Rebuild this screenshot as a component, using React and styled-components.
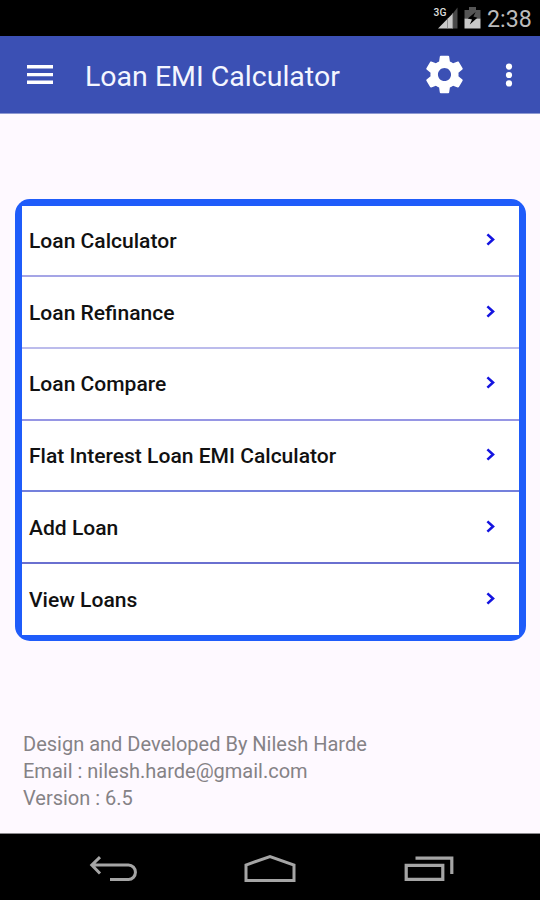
import React from "react";
import styled, { createGlobalStyle } from "styled-components";

const menuItems = [
  { name: "Loan Calculator", line: "#a5a5e6" },
  { name: "Loan Refinance", line: "#bcbcec" },
  { name: "Loan Compare", line: "#9696e4" },
  { name: "Flat Interest Loan EMI Calculator", line: "#7480dc" },
  { name: "Add Loan", line: "#6a70d0" },
  { name: "View Loans" }
];

const SignalIcon = () => (
  <svg width="26" height="24" viewBox="433 6 26 24">
    <path d="M438 28.5 453 13.2V28.5Z" fill="#c9c9c9" />
    <path d="M453 13.2 457.5 7.5V28.5H453Z" fill="#494949" />
    <path d="M447.5 18.5V28.5M452.7 13V28.5" stroke="#777" strokeWidth="0.7" />
    <text
      x="433.6"
      y="16.4"
      fill="#dcdcdc"
      stroke="#000"
      strokeWidth="2"
      paintOrder="stroke"
      fontFamily="Roboto, sans-serif"
      fontSize="11.5"
      fontWeight="500"
      textLength="12.8"
      lengthAdjust="spacingAndGlyphs"
    >
      3G
    </text>
  </svg>
);

const BatteryIcon = () => (
  <svg width="17" height="24" viewBox="464 6 17 24">
    <path d="M469 7h7v3h4.5v8.5h-16V10H469Z" fill="#555" />
    <path d="M464.5 18.5h16v10h-16Z" fill="#c9c9c9" />
    <path d="M475.6 12 467.8 18.4 472 19.6 469.8 24.6 477.4 17.8 473.4 16.6Z" fill="#000" />
  </svg>
);

const MenuIcon = () => (
  <svg width="26" height="22" viewBox="0 0 26 22">
    <path d="M0 2.8h26M0 10.6h26M0 18.3h26" stroke="#fff" strokeWidth="3.4" />
  </svg>
);

const GearIcon = () => (
  <svg width="45" height="45" viewBox="0 0 24 24" fill="#fff">
    <path d="M19.43 12.98c.04-.32.07-.64.07-.98s-.03-.66-.07-.98l2.11-1.65c.19-.15.24-.42.12-.64l-2-3.46c-.12-.22-.39-.3-.61-.22l-2.49 1c-.52-.4-1.08-.73-1.69-.98l-.38-2.65C14.46 2.18 14.25 2 14 2h-4c-.25 0-.46.18-.49.42l-.38 2.65c-.61.25-1.17.59-1.69.98l-2.49-1c-.23-.09-.49 0-.61.22l-2 3.46c-.13.22-.07.49.12.64l2.11 1.65c-.04.32-.07.65-.07.98s.03.66.07.98l-2.11 1.65c-.19.15-.24.42-.12.64l2 3.46c.12.22.39.3.61.22l2.49-1c.52.4 1.08.73 1.69.98l.38 2.65c.03.24.24.42.49.42h4c.25 0 .46-.18.49-.42l.38-2.65c.61-.25 1.17-.59 1.69-.98l2.49 1c.23.09.49 0 .61-.22l2-3.46c.12-.22.07-.49-.12-.64l-2.11-1.65zM12 15.5c-1.93 0-3.5-1.57-3.5-3.5s1.57-3.5 3.5-3.5 3.5 1.57 3.5 3.5-1.57 3.5-3.5 3.5z" />
  </svg>
);

const MoreIcon = () => (
  <svg width="8" height="24" viewBox="0 0 8 24" fill="#fff">
    <circle cx="4" cy="3.6" r="3.1" />
    <circle cx="4" cy="12" r="3.1" />
    <circle cx="4" cy="20.4" r="3.1" />
  </svg>
);

const ChevronIcon = () => (
  <svg width="9" height="13" viewBox="0 0 9 13">
    <path d="M1.4 1.4 7 6.5 1.4 11.6" fill="none" stroke="#1414e0" strokeWidth="2.6" />
  </svg>
);

const BackIcon = () => (
  <svg width="48" height="28" viewBox="89 855 48 28">
    <path
      d="M92 865H128.5A6.9 7.2 0 0 1 128.5 879.5H110M100 857.2 91.8 865 100 873.5"
      fill="none"
      stroke="#a5a5a5"
      strokeWidth="3"
    />
  </svg>
);

const HomeIcon = () => (
  <svg width="52" height="30" viewBox="244.5 853 52 30">
    <path d="M246.5 879.5V864L270.5 855.5 294.5 864V879.5Z" fill="none" stroke="#a5a5a5" strokeWidth="3" />
  </svg>
);

const RecentsIcon = () => (
  <svg width="50" height="28" viewBox="404.5 855 50 28">
    <path
      d="M406.7 865.4H443.3V879.4H406.7ZM416 858.2H452.3V874"
      fill="none"
      stroke="#a5a5a5"
      strokeWidth="3.2"
    />
  </svg>
);

const App = () => (
  <Screen>
    <GlobalStyle />
    <StatusBar>
      <SignalIcon />
      <BatteryIcon />
      <Clock>2:38</Clock>
    </StatusBar>
    <Toolbar>
      <IconButton aria-label="Menu">
        <MenuIcon />
      </IconButton>
      <Title>Loan EMI Calculator</Title>
      <Actions>
        <IconButton aria-label="Settings">
          <GearIcon />
        </IconButton>
        <IconButton aria-label="More">
          <MoreIcon />
        </IconButton>
      </Actions>
    </Toolbar>
    <Content>
      <MenuCard>
        {menuItems.map(item => (
          <MenuRow key={item.name} $line={item.line}>
            <RowName>{item.name}</RowName>
            <ChevronIcon />
          </MenuRow>
        ))}
      </MenuCard>
      <Credits>
        <CreditLine>Design and Developed By Nilesh Harde</CreditLine>
        <CreditLine>Email : nilesh.harde@gmail.com</CreditLine>
        <CreditLine>Version : 6.5</CreditLine>
      </Credits>
    </Content>
    <NavBar>
      <BackIcon />
      <HomeIcon />
      <RecentsIcon />
    </NavBar>
  </Screen>
);

export default App;

const GlobalStyle = createGlobalStyle`
  * {
    box-sizing: border-box;
  }
  body {
    margin: 0;
    font-family: Roboto, sans-serif;
  }
  svg {
    display: block;
    flex-shrink: 0;
  }
`;

const Screen = styled.div`
  display: flex;
  flex-direction: column;
  width: 540px;
  height: 900px;
  overflow: hidden;
  background: #fef9ff;
`;

const StatusBar = styled.div`
  display: flex;
  height: 36px;
  padding: 6px 9px 0 0;
  justify-content: flex-end;
  gap: 5px;
  background: #000;
`;

const Clock = styled.span`
  width: 45px;
  padding-left: 1px;
  font-size: 23.2px;
  line-height: 26px;
  color: #bcbcbc;
`;

const Toolbar = styled.div`
  display: flex;
  align-items: center;
  height: 78px;
  padding: 0 27px;
  background: #3b50b4;
  border-bottom: 1px solid #8e99d2;
`;

const IconButton = styled.button`
  display: flex;
  padding: 0;
  border: 0;
  background: none;
`;

const Title = styled.h1`
  margin: 3px 0 0 32px;
  font-size: 28.5px;
  font-weight: 400;
  white-space: nowrap;
  color: #f4f6ff;
`;

const Actions = styled.div`
  display: flex;
  align-items: center;
  gap: 38px;
  margin-left: auto;
`;

const Content = styled.main`
  display: flex;
  flex: 1;
  flex-direction: column;
  padding: 85px 14.5px 0;
`;

const MenuCard = styled.div`
  height: 442px;
  padding: 6.7px 7px 6px;
  border-radius: 15px;
  background: #1f5cfa;
`;

const MenuRow = styled.div`
  display: flex;
  align-items: center;
  justify-content: space-between;
  height: 71.7px;
  padding: 0 24px 2px 7.5px;
  background: #fff;
  border-bottom: ${props => (props.$line ? `2px solid ${props.$line}` : "0")};

  &:last-child {
    height: 70.8px;
    padding-bottom: 2px;
  }
`;

const RowName = styled.span`
  padding-top: 2px;
  font-size: 21.05px;
  font-weight: 500;
  color: #111;
`;

const Credits = styled.div`
  margin: 90px 0 0 8.5px;
`;

const CreditLine = styled.p`
  margin: 0;
  font-size: 20px;
  line-height: 26.8px;
  color: #858286;
`;

const NavBar = styled.nav`
  display: flex;
  align-items: center;
  justify-content: space-between;
  height: 67px;
  padding: 3px 86px 0 88.5px;
  background: #000;
  border-top: 1px solid #8b898c;
`;
